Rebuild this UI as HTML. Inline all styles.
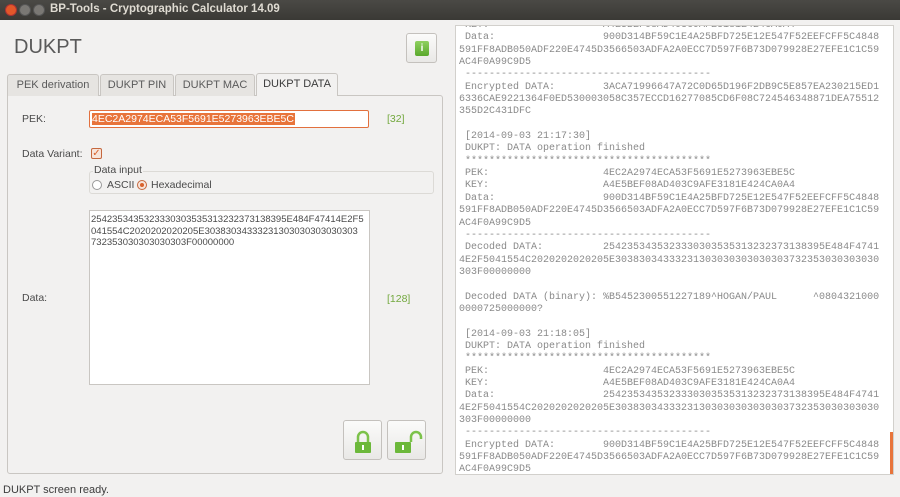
<!DOCTYPE html>
<html><head><meta charset="utf-8"><style>
*{margin:0;padding:0;box-sizing:border-box}
body{width:900px;height:497px;background:#f2f1f0;font-family:"Liberation Sans",sans-serif;position:relative;overflow:hidden;color:#3c3c3c}
.abs{position:absolute}
.title{left:0;top:0;width:900px;height:20px;background:linear-gradient(#4a4945,#3a3935);}
.title span{position:absolute;left:50px;top:3px;font-size:11.5px;font-weight:bold;color:#dfdbd2}
.wb{position:absolute;top:4px;width:12px;height:12px;border-radius:50%;background:#7a7874;border:1px solid #555}
.tab{position:absolute;top:74px;height:22px;border:1px solid #c9c6c2;border-bottom:none;border-radius:3px 3px 0 0;background:#e6e4e1;font-size:11px;color:#5a5a5a;text-align:center;line-height:21px}
.lbl{position:absolute;font-size:10.5px;color:#4a4a4a}
.green{position:absolute;font-size:10.5px;color:#73a83e}
.btn{position:absolute;width:39px;height:40px;border:1px solid #c4c1bd;border-radius:3px;background:linear-gradient(#fbfbfa,#e9e8e6)}
pre{font-family:"Liberation Mono",monospace;font-size:10px;line-height:12.35px;color:#8a8a8a}
</style></head><body>
<div class="abs title"><div class="wb" style="left:5px;background:#e2572a;border-color:#a33"></div><div class="wb" style="left:19px"></div><div class="wb" style="left:33px"></div><span>BP-Tools - Cryptographic Calculator 14.09</span></div>

<div class="abs" style="left:14px;top:36px;font-size:20px;color:#5a5a5a">DUKPT</div>
<div class="btn" style="left:406px;top:33px;width:31px;height:30px"><div style="position:absolute;left:8px;top:7px;width:14px;height:15px;background:linear-gradient(#8fd060,#5aa82c);border-radius:2px;color:#fff;font-size:10px;font-weight:bold;text-align:center;line-height:15px">i</div></div>

<div class="abs" style="left:7px;top:95px;width:436px;height:379px;border:1px solid #c9c6c2;border-radius:0 3px 3px 3px;background:#f2f1f0"></div>
<div class="tab" style="left:7px;width:92px">PEK derivation</div>
<div class="tab" style="left:100px;width:74px">DUKPT PIN</div>
<div class="tab" style="left:175px;width:80px">DUKPT MAC</div>
<div class="tab" style="left:256px;width:82px;top:73px;height:23px;background:#f2f1f0;color:#3c3c3c">DUKPT DATA</div>

<div class="lbl" style="left:22px;top:113px">PEK:</div>
<div class="abs" style="left:89px;top:110px;width:280px;height:18px;border:1px solid #e2703e;border-radius:2px;background:#fff"><span style="position:absolute;left:2px;top:2px;background:#e8743b;color:#fff;font-size:10.5px;line-height:12px;padding-right:1px">4EC2A2974ECA53F5691E5273963EBE5C</span></div>
<div class="green" style="left:387px;top:113px">[32]</div>

<div class="lbl" style="left:22px;top:148px">Data Variant:</div>
<div class="abs" style="left:91px;top:148px;width:11px;height:11px;border:1px solid #c5683e;border-radius:2px;background:#f7e4da;color:#d9622c;font-size:10px;line-height:9px;text-align:center">✓</div>
<div class="abs" style="left:89px;top:171px;width:345px;height:23px;border:1px solid #dcdad6;border-radius:3px"></div>
<div class="lbl" style="left:93px;top:164px;background:#f2f1f0;padding:0 1px">Data input</div>
<div class="abs" style="left:92px;top:180px;width:10px;height:10px;border:1px solid #999;border-radius:50%;background:#fff"></div>
<div class="lbl" style="left:107px;top:179px">ASCII</div>
<div class="abs" style="left:137px;top:180px;width:10px;height:10px;border:1px solid #c5683e;border-radius:50%;background:#f7e4da"><div style="position:absolute;left:2px;top:2px;width:4px;height:4px;border-radius:50%;background:#d9622c"></div></div>
<div class="lbl" style="left:151px;top:179px">Hexadecimal</div>

<div class="abs" style="left:89px;top:210px;width:281px;height:175px;border:1px solid #c9c6c2;background:#fff;font-size:9.5px;line-height:11.7px;color:#4a4a4a;padding:3px 0 0 1px;white-space:nowrap;overflow:hidden">2542353435323330303535313232373138395E484F47414E2F5<br>041554C2020202020205E30383034333231303030303030303<br>732353030303030303F00000000</div>
<div class="lbl" style="left:22px;top:292px">Data:</div>
<div class="green" style="left:387px;top:293px">[128]</div>

<div class="btn" style="left:343px;top:420px">
<svg width="39" height="40" style="position:absolute;left:-1px;top:-1px"><path d="M15 22v-5a5 5 0 0 1 10 0v5" fill="none" stroke="#7cc24a" stroke-width="2.5"/><rect x="12" y="22" width="16" height="11" rx="1" fill="#6cb83a"/><rect x="19" y="25" width="2" height="5" fill="#fff"/></svg></div>
<div class="btn" style="left:387px;top:420px">
<svg width="39" height="40" style="position:absolute;left:-1px;top:-1px"><path d="M24 22v-5a5 5 0 0 1 10 0v2" fill="none" stroke="#7cc24a" stroke-width="2.5"/><rect x="8" y="22" width="16" height="11" rx="1" fill="#6cb83a"/><rect x="15" y="25" width="2" height="5" fill="#fff"/></svg></div>

<div class="abs" style="left:3px;top:484px;font-size:11px;color:#3c3c3c">DUKPT screen ready.</div>

<div class="abs" style="left:455px;top:25px;width:439px;height:450px;border:1px solid #d2d0cc;background:#fff;overflow:hidden">
<pre style="position:absolute;left:3px;top:-6px">&nbsp;KEY:                   A4E5BEF08AD403C9AFE3181E424CA0A4
 Data:                  900D314BF59C1E4A25BFD725E12E547F52EEFCFF5C4848
591FF8ADB050ADF220E4745D3566503ADFA2A0ECC7D597F6B73D079928E27EFE1C1C59
AC4F0A99C9D5
 -----------------------------------------
 Encrypted DATA:        3ACA71996647A72C0D65D196F2DB9C5E857EA230215ED1
6336CAE9221364F0ED530003058C357ECCD16277085CD6F08C724546348871DEA75512
355D2C431DFC

 [2014-09-03 21:17:30]
 DUKPT: DATA operation finished
 *****************************************
 PEK:                   4EC2A2974ECA53F5691E5273963EBE5C
 KEY:                   A4E5BEF08AD403C9AFE3181E424CA0A4
 Data:                  900D314BF59C1E4A25BFD725E12E547F52EEFCFF5C4848
591FF8ADB050ADF220E4745D3566503ADFA2A0ECC7D597F6B73D079928E27EFE1C1C59
AC4F0A99C9D5
 -----------------------------------------
 Decoded DATA:          2542353435323330303535313232373138395E484F4741
4E2F5041554C2020202020205E30383034333231303030303030303732353030303030
303F00000000

 Decoded DATA (binary): %B5452300551227189^HOGAN/PAUL      ^0804321000
0000725000000?

 [2014-09-03 21:18:05]
 DUKPT: DATA operation finished
 *****************************************
 PEK:                   4EC2A2974ECA53F5691E5273963EBE5C
 KEY:                   A4E5BEF08AD403C9AFE3181E424CA0A4
 Data:                  2542353435323330303535313232373138395E484F4741
4E2F5041554C2020202020205E30383034333231303030303030303732353030303030
303F00000000
 -----------------------------------------
 Encrypted DATA:        900D314BF59C1E4A25BFD725E12E547F52EEFCFF5C4848
591FF8ADB050ADF220E4745D3566503ADFA2A0ECC7D597F6B73D079928E27EFE1C1C59
AC4F0A99C9D5</pre>
<div style="position:absolute;right:0;top:406px;width:3px;height:44px;background:#e8743b"></div>
</div>
</body></html>
